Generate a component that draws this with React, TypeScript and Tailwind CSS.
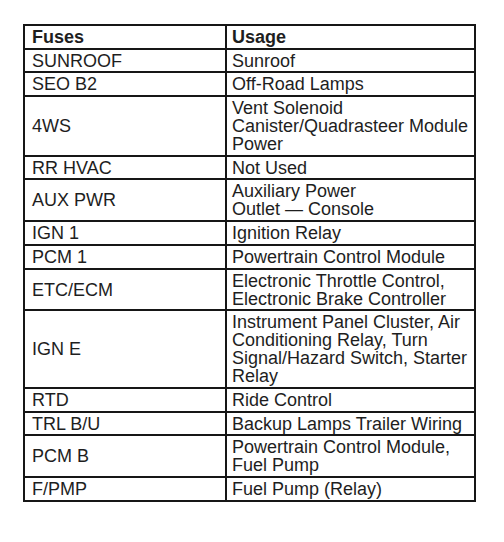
import React from "react";

type Row = { fuse: string; usage: string[] };

const rows: Row[] = [
  { fuse: "SUNROOF", usage: ["Sunroof"] },
  { fuse: "SEO B2", usage: ["Off-Road Lamps"] },
  { fuse: "4WS", usage: ["Vent Solenoid", "Canister/Quadrasteer Module", "Power"] },
  { fuse: "RR HVAC", usage: ["Not Used"] },
  { fuse: "AUX PWR", usage: ["Auxiliary Power", "Outlet \u2014 Console"] },
  { fuse: "IGN 1", usage: ["Ignition Relay"] },
  { fuse: "PCM 1", usage: ["Powertrain Control Module"] },
  { fuse: "ETC/ECM", usage: ["Electronic Throttle Control,", "Electronic Brake Controller"] },
  {
    fuse: "IGN E",
    usage: [
      "Instrument Panel Cluster, Air",
      "Conditioning Relay, Turn",
      "Signal/Hazard Switch, Starter",
      "Relay",
    ],
  },
  { fuse: "RTD", usage: ["Ride Control"] },
  { fuse: "TRL B/U", usage: ["Backup Lamps Trailer Wiring"] },
  { fuse: "PCM B", usage: ["Powertrain Control Module,", "Fuel Pump"] },
  { fuse: "F/PMP", usage: ["Fuel Pump (Relay)"] },
];

const App = () => {
  return (
    <div className="w-[504px] h-[542px] bg-white pt-[24px] pl-[23px] font-['Liberation_Sans',Arial,sans-serif] text-[18px] leading-[18px] text-[#1e1e1e]">
      <table className="table-fixed border-collapse border-2 border-[#161616] w-[453px]">
        <colgroup>
          <col className="w-[202px]" />
          <col />
        </colgroup>
        <thead>
          <tr>
            <th className="border-2 border-[#161616] text-left font-bold pl-[7px] pr-1 pt-[2px] pb-[1.7px] align-middle">
              Fuses
            </th>
            <th className="border-2 border-[#161616] text-left font-bold pl-[5px] pr-1 pt-[2px] pb-[1.7px] align-middle">
              Usage
            </th>
          </tr>
        </thead>
        <tbody>
          {rows.map((r) => (
            <tr key={r.fuse}>
              <td className="border-2 border-[#161616] pl-[7px] pr-1 pt-[2px] pb-[1.7px] align-middle">
                {r.fuse}
              </td>
              <td className="border-2 border-[#161616] pl-[5px] pr-1 pt-[2px] pb-[1.7px] align-middle">
                {r.usage.map((line, i) => (
                  <div key={i} className="whitespace-nowrap">
                    {line}
                  </div>
                ))}
              </td>
            </tr>
          ))}
        </tbody>
      </table>
    </div>
  );
};

export default App;
